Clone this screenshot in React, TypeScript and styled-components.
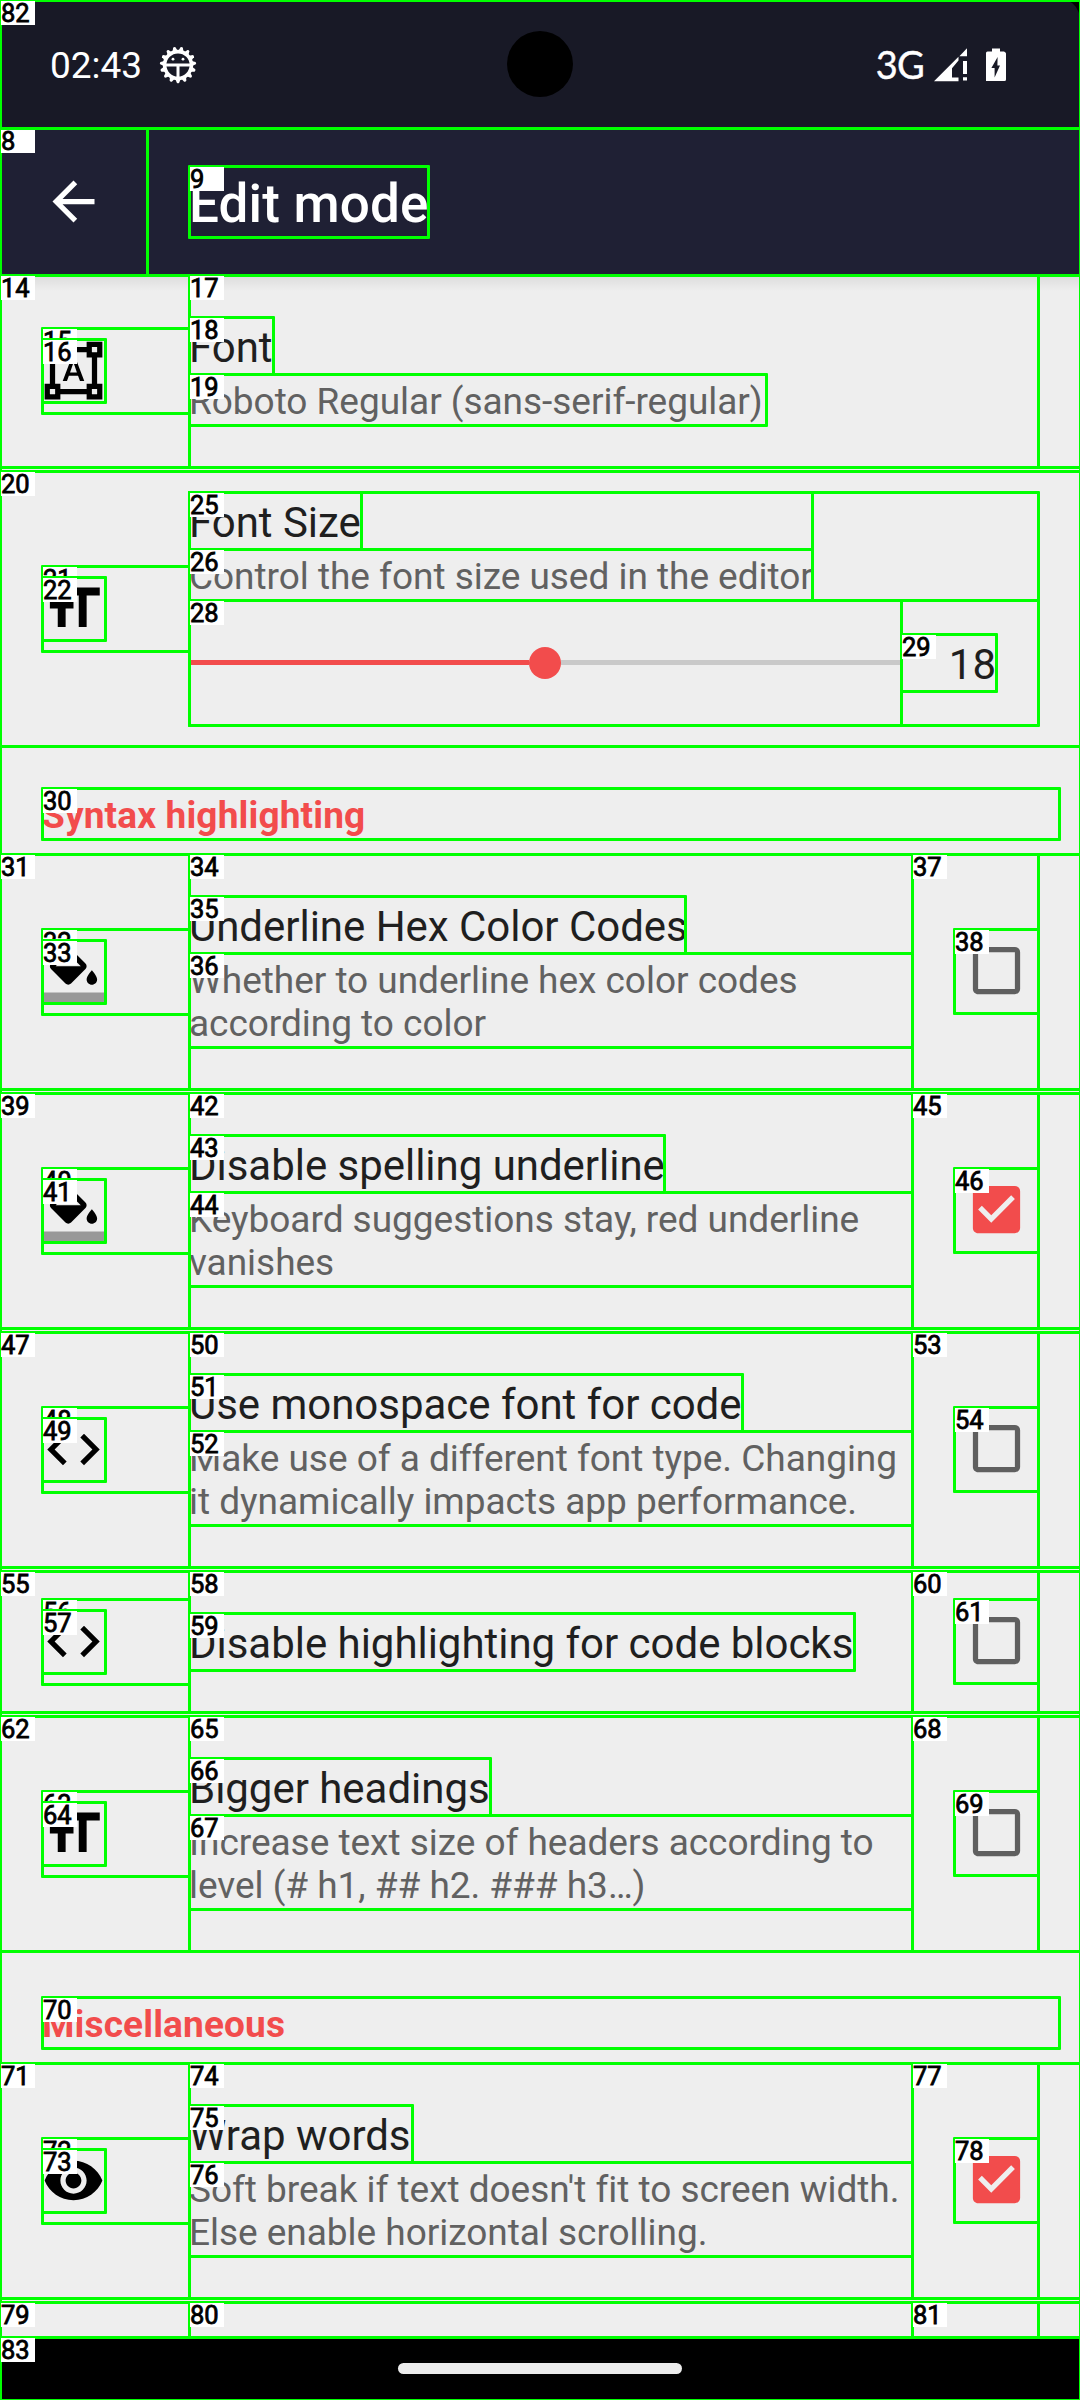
import React from "react";
import styled, { createGlobalStyle } from "styled-components";

const GlobalStyle = createGlobalStyle`
  html, body { margin: 0; padding: 0; background: #000; }
  * { box-sizing: border-box; }
`;

const colors = {
  status: "#181926",
  toolbar: "#1f2034",
  surface: "#eeeeee",
  accent: "#f24c4c",
  title: "#1f1f1f",
  summary: "#616161",
  outline: "#00ff00",
};

const Screen = styled.div`
  position: relative;
  display: flex;
  flex-direction: column;
  width: 1080px;
  height: 2400px;
  overflow: hidden;
  background: ${colors.surface};
  font-family: Roboto, "Noto Sans", sans-serif;
`;

const StatusBar = styled.header`
  position: relative;
  flex: none;
  display: flex;
  justify-content: space-between;
  align-items: center;
  height: 128px;
  padding: 2px 74px 0 50px;
  background: ${colors.status};
  color: #fff;
`;

const StatusGroup = styled.div`
  display: flex;
  align-items: center;
`;

const Clock = styled.span`
  font-size: 37px;
  line-height: 44px;
  margin: 2px 17px 0 0;
`;

const Network = styled.span`
  font-family: Lato, Roboto, sans-serif;
  font-weight: 400;
  font-size: 38px;
  letter-spacing: -0.8px;
  line-height: 44px;
  -webkit-text-stroke: 0.4px #fff;
  margin: 0 10px 2px 0;
`;

const SignalSlot = styled.div`
  display: flex;
  margin-right: 18px;
`;

const Camera = styled.div`
  position: absolute;
  left: 507px;
  top: 31px;
  width: 66px;
  height: 66px;
  border-radius: 50%;
  background: #000;
`;

const Corner = styled.svg`
  position: absolute;
  right: 0;
  top: 0;
`;

const Toolbar = styled.div`
  position: relative;
  z-index: 1;
  flex: none;
  display: flex;
  align-items: center;
  height: 147px;
  background: ${colors.toolbar};
  color: #fff;
  &::after {
    content: "";
    position: absolute;
    left: 0;
    right: 0;
    top: 100%;
    height: 16px;
    background: linear-gradient(rgba(0, 0, 0, 0.08), rgba(0, 0, 0, 0));
  }
`;

const BackButton = styled.button`
  display: flex;
  align-items: center;
  justify-content: center;
  width: 147px;
  height: 147px;
  margin-right: 42px;
  padding: 0;
  border: 0;
  background: none;
  color: inherit;
`;

const ToolbarTitle = styled.h1`
  margin: 0;
  padding: 7px 0 2px;
  font-weight: 500;
  font-size: 53px;
  letter-spacing: 0.15px;
  line-height: 62px;
`;

const Content = styled.main`
  flex: 1;
  min-height: 0;
  overflow: hidden;
  display: flex;
  flex-direction: column;
`;

const Row = styled.section<{ $last?: boolean }>`
  flex: none;
  display: flex;
  align-items: center;
  padding: 0 42px;
  margin-bottom: ${(p) => (p.$last ? 0 : 4)}px;
`;

const IconFrame = styled.div<{ $plain?: boolean }>`
  flex: none;
  display: flex;
  width: 147px;
  padding: 11px 0;
  margin-bottom: ${(p) => (p.$plain ? 1 : 0)}px;
`;

const Body = styled.div<{ $tight?: boolean }>`
  flex: 1;
  min-width: 0;
  padding: ${(p) => (p.$tight ? 21 : 42)}px 0;
`;

const Title = styled.div`
  height: 57px;
  padding-top: 6px;
  font-size: 42px;
  letter-spacing: -0.03px;
  line-height: 49px;
  color: ${colors.title};
  white-space: nowrap;
`;

const Summary = styled.div`
  padding: 6px 0 2px;
  font-size: 37px;
  letter-spacing: -0.03px;
  line-height: 43px;
  color: ${colors.summary};
  white-space: pre;
`;

const Widget = styled.div`
  flex: none;
  display: flex;
  justify-content: flex-end;
  width: 126px;
`;

const CheckFrame = styled.div`
  display: flex;
  align-items: flex-start;
  width: 84px;
  height: 85px;
  padding: 10px 0 0 11px;
`;

const Category = styled.h2`
  flex: none;
  margin: 0;
  padding: 48px 21px 17px 42px;
  font-size: 37px;
  letter-spacing: 0.15px;
  font-weight: 700;
  line-height: 43px;
  color: ${colors.accent};
`;

const SliderRow = styled.div`
  display: flex;
  align-items: center;
  height: 125px;
`;

const Slider = styled.div`
  display: flex;
  align-items: center;
  width: 712px;
`;

const Track = styled.div<{ $active?: boolean }>`
  flex: 1;
  height: 5px;
  background: ${(p) => (p.$active ? colors.accent : "#c9c9c9")};
`;

const Thumb = styled.div`
  width: 32px;
  height: 32px;
  border-radius: 50%;
  background: ${colors.accent};
`;

const SliderValue = styled(Title)`
  width: 95px;
  text-align: right;
`;

const PeekRow = styled.div`
  flex: none;
  height: 35px;
`;

const NavBar = styled.footer`
  flex: none;
  display: flex;
  justify-content: center;
  height: 63px;
  padding-top: 26px;
  background: #000;
`;

const NavHandle = styled.div`
  width: 284px;
  height: 11px;
  border-radius: 6px;
  background: #ececec;
`;

/* Layout inspector overlay: outlines of the view tree with their indices. */
const Overlay = styled.div`
  position: absolute;
  inset: 0;
  z-index: 2;
  pointer-events: none;
`;

const Outline = styled.div`
  position: absolute;
  border: 3px solid ${colors.outline};
  border-radius: 1px;
`;

const Tag = styled.span`
  position: absolute;
  left: -1px;
  top: -1px;
  width: 34px;
  height: 24px;
  background: #fff;
  color: #000;
  font-family: Roboto, sans-serif;
  font-size: 25.5px;
  line-height: 25px;
  letter-spacing: -0.2px;
  -webkit-text-stroke: 0.8px #000;
`;

const glyphs = {
  back: "M20 11H7.83l5.59-5.59L12 4l-8 8 8 8 1.41-1.41L7.83 13H20v-2z",
  shapes:
    "M23 7V1h-6v2H7V1H1v6h2v10H1v6h6v-2h10v2h6v-6h-2V7h2zM3 3h2v2H3V3zm2 18H3v-2h2v2zm12-2H7v-2H5V7h2V5h10v2h2v10h-2v2zm4 2h-2v-2h2v2zM19 5V3h2v2h-2zm-5.27 9h-3.49l-.73 2H7.89l3.4-9h1.4l3.41 9h-1.63l-.74-2zm-3.04-1.26h2.61L12 8.91l-1.31 3.83z",
  size: "M9 4v3h5v12h3V7h5V4H9zm-6 8h3v7h3v-7h3V9H3v3z",
  fill: "M16.56 8.94L7.62 0 6.21 1.41l2.38 2.38-5.15 5.15c-.59.59-.59 1.54 0 2.12l5.5 5.5c.29.29.68.44 1.06.44s.77-.15 1.06-.44l5.5-5.5c.59-.58.59-1.53 0-2.12zM5.21 10L10 5.21 14.79 10H5.21zM19 11.5s-2 2.17-2 3.5c0 1.1.9 2 2 2s2-.9 2-2c0-1.33-2-3.5-2-3.5z",
  code: "M9.4 16.6L4.8 12l4.6-4.6L8 6l-6 6 6 6 1.4-1.4zm5.2 0l4.6-4.6-4.6-4.6L16 6l6 6-6 6-1.4-1.4z",
  eye: "M12 4.5C7 4.5 2.73 7.61 1 12c1.73 4.39 6 7.5 11 7.5s9.27-3.11 11-7.5c-1.73-4.39-6-7.5-11-7.5zM12 17c-2.76 0-5-2.24-5-5s2.24-5 5-5 5 2.24 5 5-2.24 5-5 5zm0-8c-1.66 0-3 1.34-3 3s1.34 3 3 3 3-1.34 3-3-1.34-3-3-3z",
  checked:
    "M19 3H5c-1.1 0-2 .9-2 2v14c0 1.1.9 2 2 2h14c1.1 0 2-.9 2-2V5c0-1.1-.9-2-2-2zm-9 14l-5-5 1.41-1.41L10 14.17l7.59-7.59L19 8l-9 9z",
  unchecked:
    "M19 5v14H5V5h14m0-2H5c-1.1 0-2 .9-2 2v14c0 1.1.9 2 2 2h14c1.1 0 2-.9 2-2V5c0-1.1-.9-2-2-2z",
};

type Glyph = keyof typeof glyphs;

const Icon = ({ name, color = "#000" }: { name: Glyph; color?: string }) => (
  <svg width="63" height="63" viewBox="0 0 24 24" fill={color}>
    <path d={glyphs[name]} />
    {name === "fill" && <path d="M0 20h24v4H0z" opacity=".36" />}
  </svg>
);

const BugIcon = () => {
  const teeth = Array.from({ length: 15 }, (_, i) => i * 24 + 12);
  return (
    <svg width="38" height="38" viewBox="-19 -19 38 38">
      <circle r="13.4" fill="none" stroke="#fff" strokeWidth="3.6" />
      {teeth.map((a) => (
        <path key={a} d="M-2.6 -14L-1.2 -17.8Q0 -18.8 1.2 -17.8L2.6 -14Z" fill="#fff" transform={`rotate(${a})`} />
      ))}
      <path d="M-13 -1.5H13V1.4H1.5V13H-1.5V1.4H-13Z" fill="#fff" />
      <circle cx="-5" cy="-5.8" r="1.4" fill="#fff" />
      <circle cx="5" cy="-5.8" r="1.4" fill="#fff" />
    </svg>
  );
};

const SignalIcon = () => (
  <svg width="34" height="34" viewBox="0 0 34 34" fill="#fff">
    <path d="M0 33.2L24.5 8.7V12.4L18 20.2V29.5H24.5V33.2Z" />
    <path d="M33 .3V8.2H25.4Z" />
    <path d="M29 13h4v13h-4zM29 29.3h4v3.2h-4z" />
  </svg>
);

const BatteryIcon = () => (
  <svg width="20" height="34" viewBox="0 0 20 34" fill="#fff">
    <path
      fillRule="evenodd"
      d="M6 .5H14V3.5H18Q20 4.5 20 5.5V31.5Q20 33 18.5 33H0V5Q0 3.5 1.5 3.5H6ZM11.6 9L5.4 20H8.6V29.5L14 17.5H11.4Z"
    />
  </svg>
);

const Checkbox = ({ on }: { on: boolean }) => (
  <Widget>
    <CheckFrame>
      <Icon name={on ? "checked" : "unchecked"} color={on ? colors.accent : "#5f5f5f"} />
    </CheckFrame>
  </Widget>
);

interface PreferenceProps {
  icon: Glyph;
  title: string;
  summary?: string;
  checked?: boolean;
}

const Preference = ({ icon, title, summary, checked }: PreferenceProps) => (
  <Row>
    <IconFrame $plain={checked === undefined}>
      <Icon name={icon} />
    </IconFrame>
    <Body>
      <Title>{title}</Title>
      {summary && <Summary>{summary}</Summary>}
    </Body>
    {checked !== undefined && <Checkbox on={checked} />}
  </Row>
);

type Bounds = [label: string, x1: number, y1: number, x2: number, y2: number];

/* A checkbox preference: row, icon frame, icon, text column, title, summary, widget, checkbox. */
const preferenceBounds = (first: number, y: number, titleRight: number, hasSummary = true): Bounds[] => {
  const bottom = y + (hasSummary ? 235 : 141);
  const frame = Math.floor((y + bottom) / 2) - 42;
  let n = first;
  const next = () => String(n++);
  const out: Bounds[] = [
    [next(), 0, y, 1080, bottom],
    [next(), 42, frame, 189, frame + 85],
    [next(), 42, frame + 11, 105, frame + 74],
    [next(), 189, y, 912, bottom],
    [next(), 189, y + 42, titleRight, y + 99],
  ];
  if (hasSummary) out.push([next(), 189, y + 99, 912, y + 193]);
  out.push([next(), 912, y, 1038, bottom], [next(), 954, frame, 1038, frame + 84]);
  return out;
};

const bounds: Bounds[] = [
  ["", 0, 0, 1080, 2400],
  ["", 0, 128, 147, 275],
  ["8", 0, 128, 1080, 275],
  ["9", 189, 166, 428, 237],
  ["14", 0, 275, 1080, 467],
  ["15", 42, 328, 189, 413],
  ["16", 42, 339, 105, 402],
  ["17", 189, 275, 1038, 467],
  ["18", 189, 317, 273, 374],
  ["19", 189, 374, 766, 425],
  ["20", 0, 471, 1080, 746],
  ["21", 42, 566, 189, 651],
  ["22", 42, 577, 105, 640],
  ["", 189, 492, 1038, 600],
  ["", 189, 492, 812, 600],
  ["25", 189, 492, 361, 549],
  ["26", 189, 549, 812, 600],
  ["", 189, 600, 1038, 725],
  ["28", 189, 600, 901, 725],
  ["29", 901, 634, 996, 691],
  ["30", 42, 788, 1059, 839],
  ...preferenceBounds(31, 854, 685),
  ...preferenceBounds(39, 1093, 664),
  ...preferenceBounds(47, 1332, 742),
  ...preferenceBounds(55, 1571, 854, false),
  ...preferenceBounds(62, 1716, 490),
  ["70", 42, 1997, 1059, 2048],
  ...preferenceBounds(71, 2063, 412),
  ["79", 0, 2302, 1080, 2337],
  ["80", 189, 2302, 912, 2337],
  ["81", 912, 2302, 1038, 2337],
  ["82", 0, 0, 1080, 128],
  ["83", 0, 2337, 1080, 2400],
];

const Inspector = () => (
  <Overlay>
    {bounds.map(([label, x1, y1, x2, y2], i) => (
      <Outline key={i} style={{ left: x1 - 1, top: y1 - 1, width: x2 - x1 + 3, height: y2 - y1 + 3 }}>
        {label && <Tag>{label}</Tag>}
      </Outline>
    ))}
  </Overlay>
);

export default function App() {
  return (
    <Screen>
      <GlobalStyle />
      <StatusBar>
        <StatusGroup>
          <Clock>02:43</Clock>
          <BugIcon />
        </StatusGroup>
        <Camera />
        <StatusGroup>
          <Network>3G</Network>
          <SignalSlot>
            <SignalIcon />
          </SignalSlot>
          <BatteryIcon />
        </StatusGroup>
        <Corner width="14" height="18" viewBox="0 0 14 18">
          <path d="M0 0H14V18Q12 4 0 0Z" fill="#000" />
        </Corner>
      </StatusBar>
      <Toolbar>
        <BackButton aria-label="Back">
          <Icon name="back" color="#fff" />
        </BackButton>
        <ToolbarTitle>Edit mode</ToolbarTitle>
      </Toolbar>
      <Content>
        <Preference icon="shapes" title="Font" summary="Roboto Regular (sans-serif-regular)" />
        <Row $last>
          <IconFrame>
            <Icon name="size" />
          </IconFrame>
          <Body $tight>
            <Title>Font Size</Title>
            <Summary>Control the font size used in the editor</Summary>
            <SliderRow>
              <Slider>
                <Track $active />
                <Thumb />
                <Track />
              </Slider>
              <SliderValue>18</SliderValue>
            </SliderRow>
          </Body>
        </Row>
        <Category>Syntax highlighting</Category>
        <Preference
          icon="fill"
          title="Underline Hex Color Codes"
          summary={"Whether to underline hex color codes\naccording to color"}
          checked={false}
        />
        <Preference
          icon="fill"
          title="Disable spelling underline"
          summary={"Keyboard suggestions stay, red underline\nvanishes"}
          checked
        />
        <Preference
          icon="code"
          title="Use monospace font for code"
          summary={"Make use of a different font type. Changing\nit dynamically impacts app performance."}
          checked={false}
        />
        <Preference icon="code" title="Disable highlighting for code blocks" checked={false} />
        <Preference
          icon="size"
          title="Bigger headings"
          summary={"Increase text size of headers according to\nlevel (# h1, ## h2. ### h3…)"}
          checked={false}
        />
        <Category>Miscellaneous</Category>
        <Preference
          icon="eye"
          title="Wrap words"
          summary={"Soft break if text doesn't fit to screen width.\nElse enable horizontal scrolling."}
          checked
        />
        <PeekRow />
      </Content>
      <NavBar>
        <NavHandle />
      </NavBar>
      <Inspector />
    </Screen>
  );
}
